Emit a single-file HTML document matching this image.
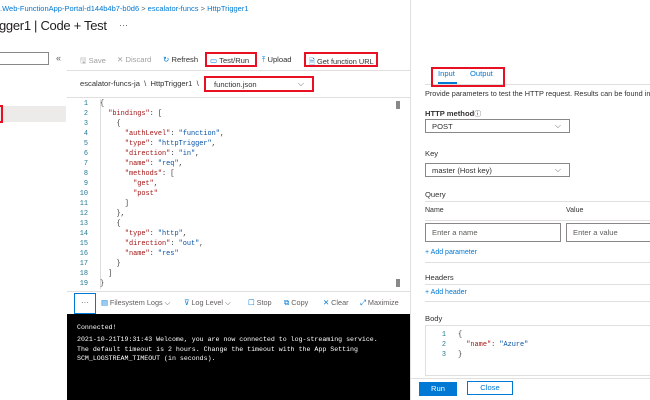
<!DOCTYPE html><html><head><style>
*{margin:0;padding:0;box-sizing:border-box}
body{width:650px;height:400px;overflow:hidden;background:#fff;font-family:"Liberation Sans",sans-serif;position:relative;color:#323130}
.a{position:absolute;white-space:nowrap}
.f8{font-size:7.6px}.f9{font-size:7.5px}
.blue{color:#0078d4}
.red{border:2px solid #e81123}
.mono{font-family:"Liberation Mono",monospace;font-size:6.9px}
.k{color:#a31515}.s{color:#0451a5}
.ln{color:#237893;width:14px;text-align:right}
.hl{position:absolute;height:1px;background:#e1dfdd}
.sel{position:absolute;border:1px solid #8a8886;height:14px;font-size:7.6px;padding:2px 6px}
.chev{position:absolute;right:8px;top:1px;color:#605e5c;font-size:8px}
.tb{position:absolute;top:298px;font-size:7.3px;color:#605e5c;white-space:nowrap}
</style></head><body>
<div class="a f9 blue" style="left:0;top:4px">.Web-FunctionApp-Portal-d144b4b7-b0d6 <span style="color:#605e5c">&gt;</span> escalator-funcs <span style="color:#605e5c">&gt;</span> HttpTrigger1</div>
<div class="a" style="left:-1px;top:18px;font-size:13px;letter-spacing:-0.3px;color:#201f1e">gger1 | Code + Test</div>
<div class="a" style="left:119px;top:20px;font-size:9px;color:#605e5c">···</div>
<div class="a" style="left:-2px;top:52px;width:51px;height:13px;border:1px solid #8a8886"></div>
<div class="a" style="left:56px;top:53px;font-size:9px;color:#605e5c">«</div>
<div class="a" style="left:0;top:106px;width:66px;height:16px;background:#edebe9"></div>
<div class="a red" style="left:-2px;top:105px;width:5px;height:18px"></div>
<div class="a f8" style="left:80px;top:55px;color:#a19f9d">🖫 Save</div>
<div class="a f8" style="left:117px;top:55px;color:#a19f9d">✕ Discard</div>
<div class="a f8" style="left:163px;top:55px"><span class="blue">↻</span> Refresh</div>
<div class="a red f8" style="left:205px;top:52px;width:52px;height:15px;padding:2px 3px"><span class="blue">▭</span> Test/Run</div>
<div class="a f8" style="left:262px;top:55px"><span class="blue">⤒</span> Upload</div>
<div class="a red" style="left:304px;top:52px;width:74px;height:15px;padding:2px 3px;font-size:7.4px;overflow:hidden"><span class="blue">🗎</span> Get function URL</div>
<div class="hl" style="left:67px;top:70px;width:343px"></div>
<div class="a f8" style="left:80px;top:79px">escalator-funcs-ja &nbsp;\ &nbsp;HttpTrigger1 &nbsp;\</div>
<div class="a red f8" style="left:204px;top:76px;width:110px;height:16px;padding:2px 8px">function.json<span class="chev">⌵</span></div>
<div class="hl" style="left:67px;top:97px;width:343px"></div>
<div class="a" style="left:100px;top:99px;width:306px;height:190px;border-left:1px solid #ddd"></div>
<div class="a" style="left:396px;top:101px;width:4px;height:8px;background:#888"></div>
<div class="a" style="left:396px;top:279px;width:4px;height:8px;background:#888"></div>
<div class="a mono" style="left:74px;top:99px;line-height:10px">
<div style="display:flex"><div class="ln">1</div><pre style="margin-left:12px">{</pre></div>
<div style="display:flex"><div class="ln">2</div><pre style="margin-left:12px">  <span class="k">"bindings"</span>: [</pre></div>
<div style="display:flex"><div class="ln">3</div><pre style="margin-left:12px">    {</pre></div>
<div style="display:flex"><div class="ln">4</div><pre style="margin-left:12px">      <span class="k">"authLevel"</span>: <span class="s">"function"</span>,</pre></div>
<div style="display:flex"><div class="ln">5</div><pre style="margin-left:12px">      <span class="k">"type"</span>: <span class="s">"httpTrigger"</span>,</pre></div>
<div style="display:flex"><div class="ln">6</div><pre style="margin-left:12px">      <span class="k">"direction"</span>: <span class="s">"in"</span>,</pre></div>
<div style="display:flex"><div class="ln">7</div><pre style="margin-left:12px">      <span class="k">"name"</span>: <span class="s">"req"</span>,</pre></div>
<div style="display:flex"><div class="ln">8</div><pre style="margin-left:12px">      <span class="k">"methods"</span>: [</pre></div>
<div style="display:flex"><div class="ln">9</div><pre style="margin-left:12px">        <span class="k">"get"</span>,</pre></div>
<div style="display:flex"><div class="ln">10</div><pre style="margin-left:12px">        <span class="k">"post"</span></pre></div>
<div style="display:flex"><div class="ln">11</div><pre style="margin-left:12px">      ]</pre></div>
<div style="display:flex"><div class="ln">12</div><pre style="margin-left:12px">    },</pre></div>
<div style="display:flex"><div class="ln">13</div><pre style="margin-left:12px">    {</pre></div>
<div style="display:flex"><div class="ln">14</div><pre style="margin-left:12px">      <span class="k">"type"</span>: <span class="s">"http"</span>,</pre></div>
<div style="display:flex"><div class="ln">15</div><pre style="margin-left:12px">      <span class="k">"direction"</span>: <span class="s">"out"</span>,</pre></div>
<div style="display:flex"><div class="ln">16</div><pre style="margin-left:12px">      <span class="k">"name"</span>: <span class="s">"res"</span></pre></div>
<div style="display:flex"><div class="ln">17</div><pre style="margin-left:12px">    }</pre></div>
<div style="display:flex"><div class="ln">18</div><pre style="margin-left:12px">  ]</pre></div>
<div style="display:flex"><div class="ln">19</div><pre style="margin-left:12px">}</pre></div>
</div>
<div class="hl" style="left:67px;top:291px;width:343px"></div>
<div class="a" style="left:74px;top:293px;width:22px;height:21px;border:1px solid #0078d4;font-size:8px;color:#605e5c;text-align:center;line-height:17px">···</div>
<div class="tb" style="left:101px"><span class="blue">▤</span> Filesystem Logs ⌵</div>
<div class="tb" style="left:184px"><span class="blue">⊽</span> Log Level ⌵</div>
<div class="tb" style="left:248px"><span class="blue">☐</span> Stop</div>
<div class="tb" style="left:284px"><span class="blue">⧉</span> Copy</div>
<div class="tb" style="left:323px"><span class="blue">✕</span> Clear</div>
<div class="tb" style="left:360px"><span class="blue">⤢</span> Maximize</div>
<div class="a" style="left:67px;top:314px;width:343px;height:86px;background:#000"></div>
<div class="a" style="left:77px;top:322px;color:#fff;font-family:'Liberation Mono',monospace;font-size:6.6px;line-height:11px">Connected!<br><span style="line-height:9.5px;display:block;margin-top:2px">2021-10-21T19:31:43  Welcome, you are now connected to log-streaming service.<br>The default timeout is 2 hours. Change the timeout with the App Setting<br>SCM_LOGSTREAM_TIMEOUT (in seconds).</span></div>
<div class="a" style="left:410px;top:0;width:240px;height:400px;border-left:1px solid #e1dfdd;background:#fff"></div>
<div class="a f8 blue" style="left:438px;top:69px">Input</div>
<div class="a f8 blue" style="left:470px;top:69px">Output</div>
<div class="a" style="left:438px;top:82px;width:19px;height:2px;background:#0078d4"></div>
<div class="hl" style="left:425px;top:84px;width:225px"></div>
<div class="a red" style="left:431px;top:67px;width:74px;height:20px"></div>
<div class="a" style="left:425px;top:89px;font-size:7.3px">Provide parameters to test the HTTP request. Results can be found in</div>
<div class="a f8" style="left:425px;top:109px;font-weight:bold;color:#323130">HTTP method<span style="font-weight:normal;font-size:7px">ⓘ</span></div>
<div class="sel a" style="left:425px;top:119px;width:145px">POST<span class="chev">⌵</span></div>
<div class="a f8" style="left:425px;top:149px">Key</div>
<div class="sel a" style="left:425px;top:163px;width:145px">master (Host key)<span class="chev">⌵</span></div>
<div class="a f8" style="left:425px;top:190px">Query</div>
<div class="hl" style="left:425px;top:201px;width:225px"></div>
<div class="a" style="left:425px;top:207px;font-size:7px">Name</div>
<div class="a" style="left:566px;top:207px;font-size:7px">Value</div>
<div class="hl" style="left:425px;top:220px;width:225px"></div>
<div class="a" style="left:425px;top:223px;width:136px;height:19px;border:1px solid #8a8886;font-size:7.6px;color:#605e5c;padding:4px 6px">Enter a name</div>
<div class="a" style="left:566px;top:223px;width:90px;height:19px;border:1px solid #8a8886;font-size:7.6px;color:#605e5c;padding:4px 6px">Enter a value</div>
<div class="a blue" style="left:425px;top:249px;font-size:7px">+ Add parameter</div>
<div class="hl" style="left:425px;top:262px;width:225px"></div>
<div class="a f8" style="left:425px;top:273px">Headers</div>
<div class="hl" style="left:425px;top:284px;width:225px"></div>
<div class="a blue" style="left:425px;top:289px;font-size:7px">+ Add header</div>
<div class="hl" style="left:425px;top:301px;width:225px"></div>
<div class="a f8" style="left:425px;top:314px">Body</div>
<div class="a" style="left:425px;top:325px;width:230px;height:51px;border:1px solid #e1dfdd"></div>
<div class="a mono" style="left:436px;top:330px;line-height:10px">
<div style="display:flex"><div class="ln" style="width:10px">1</div><pre style="margin-left:12px">{</pre></div>
<div style="display:flex"><div class="ln" style="width:10px">2</div><pre style="margin-left:12px">  <span class="k">"name"</span>: <span class="s">"Azure"</span></pre></div>
<div style="display:flex"><div class="ln" style="width:10px">3</div><pre style="margin-left:12px">}</pre></div>
</div>
<div class="hl" style="left:410px;top:378px;width:240px"></div>
<div class="a" style="left:419px;top:382px;width:38px;height:14px;background:#0078d4;color:#fff;font-size:7.6px;text-align:center;line-height:14px">Run</div>
<div class="a" style="left:467px;top:381px;width:46px;height:14px;border:1px solid #0078d4;color:#0078d4;font-size:7.6px;text-align:center;line-height:12px">Close</div>
</body></html>
